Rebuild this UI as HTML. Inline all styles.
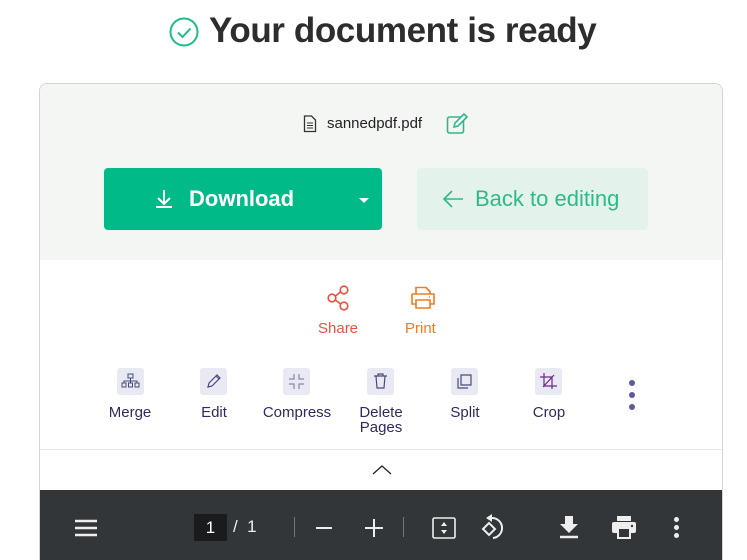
<!DOCTYPE html>
<html style="height:560px;overflow:hidden"><head><meta charset="utf-8"><style>
*{margin:0;padding:0;box-sizing:border-box}
body{width:747px;height:560px;background:#fff;font-family:"Liberation Sans",sans-serif;position:relative;overflow:hidden}
.abs{position:absolute}
h1{position:absolute;left:209px;top:11px;font-size:35px;font-weight:bold;color:#2d2d2d;white-space:nowrap;letter-spacing:-0.4px}
.card{position:absolute;left:39px;top:83px;width:684px;height:500px;border:1px solid #d4d4d4;border-radius:8px;overflow:hidden;background:#fff}
.top{position:absolute;left:0;top:0;width:100%;height:176px;background:#f3f6f3}
.dl{position:absolute;left:64px;top:84px;width:278px;height:62px;background:#00bb87;border-radius:4px;color:#fff;font-weight:bold;font-size:22px}
.back{position:absolute;left:377px;top:84px;width:231px;height:62px;background:#e3f3ec;border-radius:4px;color:#2fb98a;font-size:22px}
.lbl{position:absolute;font-size:15px;text-align:center;color:#2d2b5e;width:90px;line-height:15px}
.ib{position:absolute;width:27px;height:27px;background:#e8e9f3;border-radius:3px}
.bar{position:absolute;left:0;top:406px;width:100%;height:94px;background:#323639}
</style></head><body>
<svg class="abs" style="left:169px;top:17px" width="30" height="30" viewBox="0 0 30 30"><circle cx="15" cy="15" r="13.5" fill="none" stroke="#1ebc8a" stroke-width="2"/><path d="M9 15.5l4.5 4.5 8-8.5" fill="none" stroke="#1ebc8a" stroke-width="2"/></svg>
<h1>Your document is ready</h1>
<div class="card">
 <div class="top"></div>
 <svg class="abs" style="left:263px;top:31px" width="14" height="18" viewBox="0 0 14 18"><path d="M1.5 1h7l4 4v11.5h-11z" fill="none" stroke="#333" stroke-width="1.3"/><path d="M4 8h6M4 10.5h6M4 13h6" stroke="#333" stroke-width="1"/></svg>
 <div class="abs" style="left:287px;top:31px;font-size:15px;color:#222">sannedpdf.pdf</div>
 <svg class="abs" style="left:406px;top:29px" width="24" height="22" viewBox="0 0 24 22"><rect x="1.5" y="4" width="16" height="16" rx="2" fill="none" stroke="#2fb98a" stroke-width="1.6"/><path d="M8 14l1-4 9-9 3 3-9 9z" fill="#fff" stroke="#2fb98a" stroke-width="1.6"/></svg>
 <div class="dl">
  <svg class="abs" style="left:50px;top:21px" width="20" height="20" viewBox="0 0 20 20"><path d="M10 1v13M4 9l6 6 6-6M2 18h16" fill="none" stroke="#fff" stroke-width="2"/></svg>
  <div class="abs" style="left:85px;top:18px">Download</div>
  <div class="abs" style="left:255px;top:30px;border-left:5px solid transparent;border-right:5px solid transparent;border-top:5px solid #fff"></div>
 </div>
 <div class="back">
  <svg class="abs" style="left:25px;top:21px" width="22" height="20" viewBox="0 0 22 20"><path d="M21 10H2M10 2l-8 8 8 8" fill="none" stroke="#2fb98a" stroke-width="1.6"/></svg>
  <div class="abs" style="left:58px;top:18px">Back to editing</div>
 </div>
 <svg class="abs" style="left:287px;top:201px" width="24" height="26" viewBox="0 0 24 26"><circle cx="17" cy="5" r="3.8" fill="none" stroke="#e5533e" stroke-width="1.6"/><circle cx="5" cy="13" r="3.8" fill="none" stroke="#e5533e" stroke-width="1.6"/><circle cx="17" cy="21" r="3.8" fill="none" stroke="#e5533e" stroke-width="1.6"/><path d="M8.5 11l5-4M8.5 15l5 4" stroke="#e5533e" stroke-width="1.6"/></svg>
 <div class="abs" style="left:278px;top:236px;font-size:15px;color:#e5533e">Share</div>
 <svg class="abs" style="left:370px;top:202px" width="26" height="24" viewBox="0 0 26 24"><path d="M6 8V1.5h10l4 4V8M2 8h22v10h-4M6 18H2V8M6 14h14v8H6z" fill="none" stroke="#f07b22" stroke-width="1.6"/><path d="M19 11h1" stroke="#f07b22" stroke-width="1.5"/></svg>
 <div class="abs" style="left:365px;top:236px;font-size:15px;color:#f07b22">Print</div>

 <div class="ib" style="left:77px;top:284px"></div><svg class="abs" style="left:80px;top:287px" width="21" height="21" viewBox="0 0 21 21"><g fill="none" stroke="#4a4a7a" stroke-width="1"><rect x="8" y="3" width="5" height="4"/><path d="M10.5 7v3M4 12v-2h13v2M10.5 10v2"/><rect x="2" y="12" width="4" height="4"/><rect x="8.5" y="12" width="4" height="4"/><rect x="15" y="12" width="4" height="4"/></g></svg>
 <div class="lbl" style="left:45px;top:321px">Merge</div>
 <div class="ib" style="left:160px;top:284px"></div><svg class="abs" style="left:163px;top:287px" width="21" height="21" viewBox="0 0 21 21"><path d="M5 16l1-4 8-8 3 3-8 8z M13 5l3 3" fill="none" stroke="#4a4a7a" stroke-width="1.2"/></svg>
 <div class="lbl" style="left:129px;top:321px">Edit</div>
 <div class="ib" style="left:243px;top:284px"></div><svg class="abs" style="left:246px;top:287px" width="21" height="21" viewBox="0 0 21 21"><path d="M8 3v5H3M13 3v5h5M8 18v-5H3M13 18v-5h5" fill="none" stroke="#8888aa" stroke-width="1.2"/></svg>
 <div class="lbl" style="left:212px;top:321px">Compress</div>
 <div class="ib" style="left:327px;top:284px"></div><svg class="abs" style="left:330px;top:287px" width="21" height="21" viewBox="0 0 21 21"><path d="M4 5h13M8 5V3h5v2M6 5l1 12h7l1-12" fill="none" stroke="#4a4a7a" stroke-width="1.2"/></svg>
 <div class="lbl" style="left:296px;top:321px">Delete<br>Pages</div>
 <div class="ib" style="left:411px;top:284px"></div><svg class="abs" style="left:414px;top:287px" width="21" height="21" viewBox="0 0 21 21"><path d="M7 4h10v10H7zM4 7v10h10" fill="none" stroke="#4a4a7a" stroke-width="1.2"/></svg>
 <div class="lbl" style="left:380px;top:321px">Split</div>
 <div class="ib" style="left:495px;top:284px"></div><svg class="abs" style="left:498px;top:287px" width="21" height="21" viewBox="0 0 21 21"><path d="M6 2v13h13M2 6h12v12M5 16l11-12" fill="none" stroke="#6a2a8a" stroke-width="1.2"/></svg>
 <div class="lbl" style="left:464px;top:321px">Crop</div>
 <div class="abs" style="left:589px;top:296px;width:6px;height:6px;border-radius:3px;background:#5a5a9a"></div>
 <div class="abs" style="left:589px;top:308px;width:6px;height:6px;border-radius:3px;background:#5a5a9a"></div>
 <div class="abs" style="left:589px;top:320px;width:6px;height:6px;border-radius:3px;background:#5a5a9a"></div>
 <div class="abs" style="left:0;top:365px;width:100%;height:1px;background:#e8e8e8"></div>
 <svg class="abs" style="left:332px;top:380px" width="20" height="12" viewBox="0 0 20 12"><path d="M1 10l9-8 9 8" fill="none" stroke="#222" stroke-width="1.3"/></svg>
 <div class="bar">
  <svg class="abs" style="left:34px;top:28px" width="24" height="20" viewBox="0 0 24 20"><path d="M1 3h22M1 10h22M1 17h22" stroke="#eee" stroke-width="2.4"/></svg>
  <div class="abs" style="left:154px;top:24px;width:33px;height:27px;background:#191b1c;color:#fff;font-size:17px;text-align:center;line-height:27px">1</div>
  <div class="abs" style="left:193px;top:27px;color:#eee;font-size:17px">/&nbsp;&nbsp;1</div>
  <div class="abs" style="left:254px;top:27px;width:1px;height:20px;background:#777"></div>
  <div class="abs" style="left:276px;top:37px;width:16px;height:2px;background:#eee"></div>
  <div class="abs" style="left:325px;top:37px;width:18px;height:2px;background:#eee"></div><div class="abs" style="left:333px;top:29px;width:2px;height:18px;background:#eee"></div>
  <div class="abs" style="left:363px;top:27px;width:1px;height:20px;background:#777"></div>
  <svg class="abs" style="left:391px;top:26px" width="26" height="24" viewBox="0 0 26 24"><rect x="2" y="2" width="22" height="20" rx="1.5" fill="none" stroke="#eee" stroke-width="1.6"/><path d="M13 6l-3 4h6zM13 18l-3-4h6z" fill="#eee"/></svg>
  <svg class="abs" style="left:439px;top:23px" width="28" height="30" viewBox="0 0 28 30"><path d="M4 16l6-6 6 6-6 6z" fill="none" stroke="#eee" stroke-width="2"/><path d="M12 5a10 10 0 0 1 2 20" fill="none" stroke="#eee" stroke-width="2"/><path d="M7 5l6-4v8z" fill="#eee"/></svg>
  <svg class="abs" style="left:518px;top:24px" width="22" height="26" viewBox="0 0 22 26"><path d="M7 2h8v8h5l-9 9-9-9h5z" fill="#eee"/><path d="M2 23h18" stroke="#eee" stroke-width="2.4"/></svg>
  <svg class="abs" style="left:571px;top:25px" width="26" height="24" viewBox="0 0 26 24"><rect x="6" y="1" width="14" height="5" fill="#eee"/><rect x="1" y="7" width="24" height="11" rx="2" fill="#eee"/><rect x="7" y="13" width="12" height="10" fill="#323639" stroke="#eee" stroke-width="2"/><circle cx="21" cy="11" r="1.2" fill="#323639"/></svg>
  <div class="abs" style="left:634px;top:27px;width:5px;height:5px;border-radius:3px;background:#eee"></div>
  <div class="abs" style="left:634px;top:35px;width:5px;height:5px;border-radius:3px;background:#eee"></div>
  <div class="abs" style="left:634px;top:43px;width:5px;height:5px;border-radius:3px;background:#eee"></div>
 </div>
</div>
</body></html>
